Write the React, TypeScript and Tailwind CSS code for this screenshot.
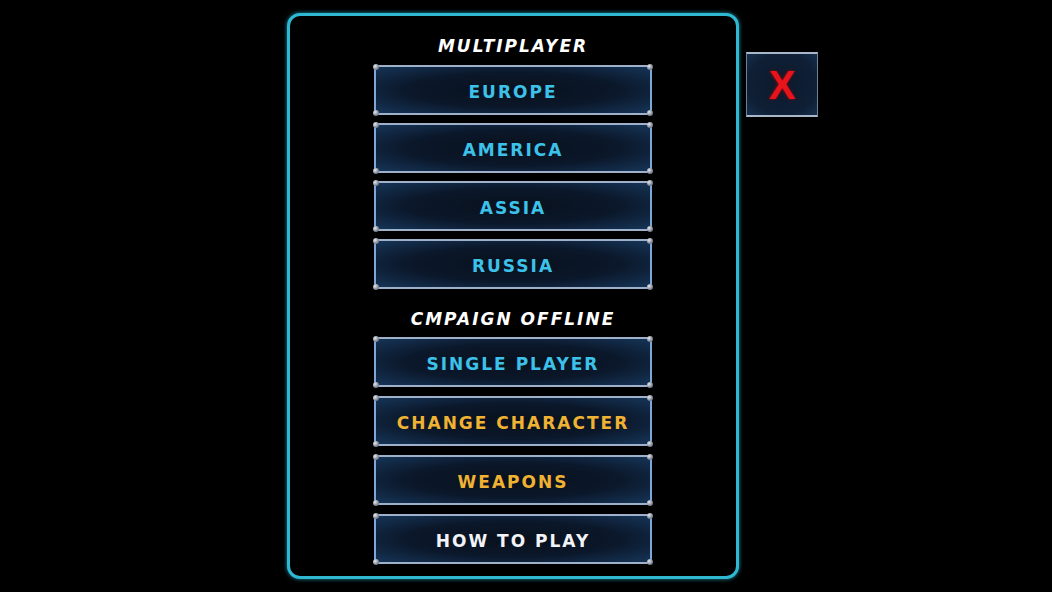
import React from "react";

type Tone = "cyan" | "orange" | "white";

const MULTIPLAYER: string[] = ["EUROPE", "AMERICA", "ASSIA", "RUSSIA"];
const CAMPAIGN: { label: string; tone: Tone }[] = [
  { label: "SINGLE PLAYER", tone: "cyan" },
  { label: "CHANGE CHARACTER", tone: "orange" },
  { label: "WEAPONS", tone: "orange" },
  { label: "HOW TO PLAY", tone: "white" },
];

const toneClass: Record<Tone, string> = {
  cyan: "text-[#3cc2ea]",
  orange: "text-[#f0b232]",
  white: "text-[#f2f4f8]",
};

const Rivet = ({ pos }: { pos: string }) => (
  <span
    className={`absolute h-[6px] w-[6px] rounded-full bg-[radial-gradient(circle_at_35%_35%,#e6e9ee,#6f7888_70%)] ${pos}`}
    aria-hidden="true"
  />
);

const MenuButton = ({ label, tone }: { label: string; tone: Tone }) => (
  <button
    type="button"
    className="relative flex h-[50px] w-[278px] items-center justify-center border-2 border-y-[#9fb1ca] border-x-[#7fa6d8] bg-[radial-gradient(ellipse_at_center,#08101c_0%,#0b182b_55%,#163558_100%)] pt-[5px]"
  >
    <Rivet pos="-left-[3px] -top-[3px]" />
    <Rivet pos="-right-[3px] -top-[3px]" />
    <Rivet pos="-left-[3px] -bottom-[3px]" />
    <Rivet pos="-right-[3px] -bottom-[3px]" />
    <span className={`text-[17px] font-bold tracking-[2px] ${toneClass[tone]}`}>{label}</span>
  </button>
);

const Heading = ({ children }: { children: React.ReactNode }) => (
  <h2 className="flex h-[20px] items-center text-[17px] font-bold italic tracking-[2px] text-white">
    {children}
  </h2>
);

export default function App() {
  return (
    <div
      className="flex h-[592px] w-[1052px] items-start bg-black pl-[287px] pt-[13px]"
      style={{ fontFamily: '"DejaVu Sans", "Liberation Sans", sans-serif' }}
    >
      <section className="flex h-[566px] w-[452px] flex-col items-center rounded-[13px] border-[3px] border-[#2fb8d2] bg-black pt-[21px] shadow-[0_0_4px_#1f8ea3]">
        <Heading>MULTIPLAYER</Heading>
        <div className="mt-[8px] flex flex-col gap-[8px]">
          {MULTIPLAYER.map((label) => (
            <MenuButton key={label} label={label} tone="cyan" />
          ))}
        </div>
        <div className="mt-[21px]">
          <Heading>CMPAIGN OFFLINE</Heading>
        </div>
        <div className="mt-[7px] flex flex-col gap-[9px]">
          {CAMPAIGN.map((item) => (
            <MenuButton key={item.label} label={item.label} tone={item.tone} />
          ))}
        </div>
      </section>

      <button
        type="button"
        className="ml-[7px] mt-[39px] flex h-[65px] w-[72px] items-center justify-center border-y-2 border-x border-y-[#a9b7cb] border-x-[#6f7f96] bg-[radial-gradient(ellipse_at_center,#0d1a2c_0%,#0f1f35_70%,#16304f_100%)]"
        aria-label="Close"
      >
        <span
          className="text-[40px] leading-none font-bold text-[#e8141c] [text-shadow:0_0_3px_#a00]"
          style={{ fontFamily: '"Liberation Sans", Arial, sans-serif' }}
        >
          X
        </span>
      </button>
    </div>
  );
}
